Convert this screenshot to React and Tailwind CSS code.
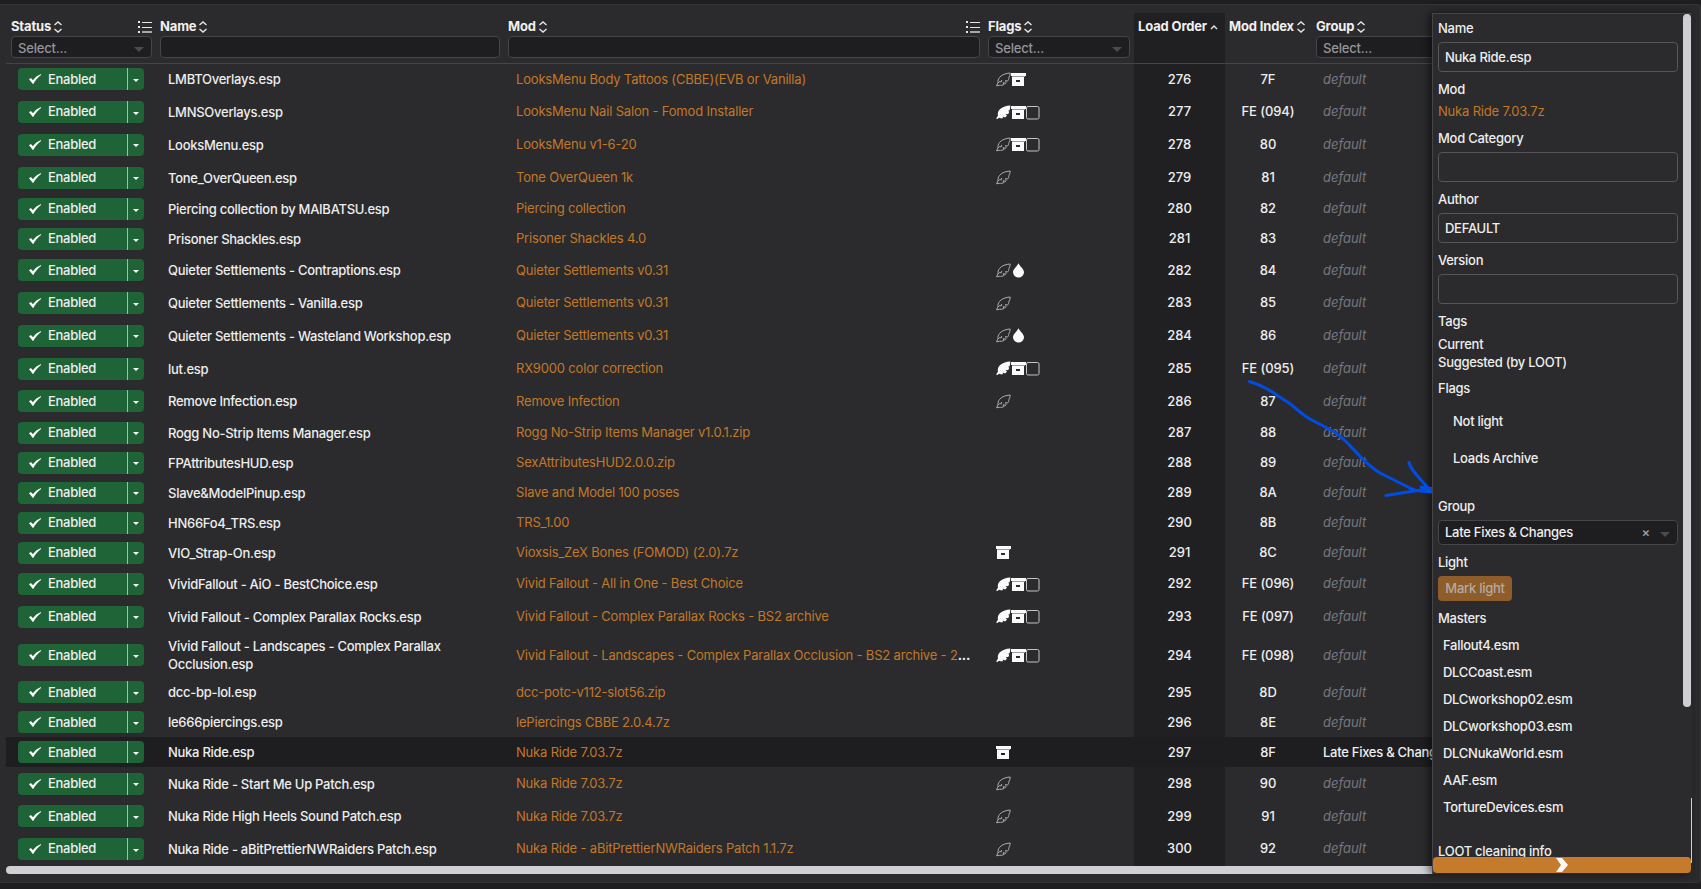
import { Fragment } from 'react';

const ROWS = [
  ['LMBTOverlays.esp', 'LooksMenu Body Tattoos (CBBE)(EVB or Vanilla)', 'la', '276', '7F'],
  ['LMNSOverlays.esp', 'LooksMenu Nail Salon - Fomod Installer', 'Lab', '277', 'FE (094)'],
  ['LooksMenu.esp', 'LooksMenu v1-6-20', 'lab', '278', '80'],
  ['Tone_OverQueen.esp', 'Tone OverQueen 1k', 'l', '279', '81'],
  ['Piercing collection by MAIBATSU.esp', 'Piercing collection', '', '280', '82'],
  ['Prisoner Shackles.esp', 'Prisoner Shackles 4.0', '', '281', '83'],
  ['Quieter Settlements - Contraptions.esp', 'Quieter Settlements v0.31', 'ld', '282', '84'],
  ['Quieter Settlements - Vanilla.esp', 'Quieter Settlements v0.31', 'l', '283', '85'],
  ['Quieter Settlements - Wasteland Workshop.esp', 'Quieter Settlements v0.31', 'ld', '284', '86'],
  ['lut.esp', 'RX9000 color correction', 'Lab', '285', 'FE (095)'],
  ['Remove Infection.esp', 'Remove Infection', 'l', '286', '87'],
  ['Rogg No-Strip Items Manager.esp', 'Rogg No-Strip Items Manager v1.0.1.zip', '', '287', '88'],
  ['FPAttributesHUD.esp', 'SexAttributesHUD2.0.0.zip', '', '288', '89'],
  ['Slave&ModelPinup.esp', 'Slave and Model 100 poses', '', '289', '8A'],
  ['HN66Fo4_TRS.esp', 'TRS_1.00', '', '290', '8B'],
  ['VIO_Strap-On.esp', 'Vioxsis_ZeX Bones (FOMOD) (2.0).7z', 'a', '291', '8C'],
  ['VividFallout - AiO - BestChoice.esp', 'Vivid Fallout - All in One - Best Choice', 'Lab', '292', 'FE (096)'],
  ['Vivid Fallout - Complex Parallax Rocks.esp', 'Vivid Fallout - Complex Parallax Rocks - BS2 archive', 'Lab', '293', 'FE (097)'],
  ['Vivid Fallout - Landscapes - Complex Parallax Occlusion.esp', 'Vivid Fallout - Landscapes - Complex Parallax Occlusion - BS2 archive - 2', 'Lab', '294', 'FE (098)'],
  ['dcc-bp-lol.esp', 'dcc-potc-v112-slot56.zip', '', '295', '8D'],
  ['le666piercings.esp', 'lePiercings CBBE 2.0.4.7z', '', '296', '8E'],
  ['Nuka Ride.esp', 'Nuka Ride 7.03.7z', 'a', '297', '8F'],
  ['Nuka Ride - Start Me Up Patch.esp', 'Nuka Ride 7.03.7z', 'l', '298', '90'],
  ['Nuka Ride High Heels Sound Patch.esp', 'Nuka Ride 7.03.7z', 'l', '299', '91'],
  ['Nuka Ride - aBitPrettierNWRaiders Patch.esp', 'Nuka Ride - aBitPrettierNWRaiders Patch 1.1.7z', 'l', '300', '92'],
];

const MASTERS = [
  'Fallout4.esm',
  'DLCCoast.esm',
  'DLCworkshop02.esm',
  'DLCworkshop03.esm',
  'DLCNukaWorld.esm',
  'AAF.esm',
  'TortureDevices.esm',
];

const COLUMNS = 'grid grid-cols-[150px_348px_480px_150px_91px_87px_240px]';

function Sort() {
  return (
    <svg className="ml-[2px] h-3 w-2.5 shrink-0" viewBox="0 0 10 12" fill="none" stroke="#e6e6e6" strokeWidth="1.4">
      <path d="M1.5 4 5 1 8.5 4M1.5 8 5 11 8.5 8" />
    </svg>
  );
}

function SortUp() {
  return (
    <svg className="ml-[3px] h-3 w-2 shrink-0" viewBox="0 0 8 12" fill="none" stroke="#e6e6e6" strokeWidth="1.4">
      <path d="M1 8 4 5 7 8" />
    </svg>
  );
}

function ListIcon() {
  return (
    <svg className="ml-auto h-3 w-3.5 shrink-0" viewBox="0 0 14 12" fill="#e6e6e6" shapeRendering="crispEdges">
      <path d="M0 0h2v2H0zM0 5h2v2H0zM0 10h2v2H0zM4 1h10v1H4zM4 6h10v1H4z" />
      <path d="M4 10h10v2H4z" fill="#a6a6a8" />
    </svg>
  );
}

function FeatherIcon({ filled }) {
  return (
    <svg className="h-[15px] w-[15px] shrink-0" viewBox="0 0 15 15">
      {filled ? (
        <path
          fill="#fafafa"
          d="M14.3.6C10 .8 5.800 2 3.400 4.800 2 6.600 1.500 8.500 2 10.600L.3 13.300l.7.9 2-1.4c1.300.6 2.700.7 4 .4L6.800 11.600l2.300 1c.8-.5 1.500-1.200 1.900-2L9.600 9.200l2.500-.1c.7-.9 1-1.700 1.100-2.700l-1.100-.5 1.600-1c.4-1.200.6-2.700.6-4.300z"
        />
      ) : (
        <path
          fill="none"
          stroke="#adadad"
          strokeWidth="1"
          strokeLinejoin="round"
          d="M14.2 1C10 1.300 5.800 2.600 3.500 5.400 2.200 7.200 1.800 9 2 10.600L.6 13.800l2.600-.5c1.900.2 3.600-.1 5-.9L7 10.700l2.800.6c.5-.7.4-1.500-.4-2.600l2.300.2c1-1.200 1.100-2 1.100-3.100.9-1.500 1.300-3 1.400-4.800zM2 10.800 3.800 9.500l1.300.5.6-2"
        />
      )}
    </svg>
  );
}

function ArchiveIcon() {
  return (
    <svg className="h-[15px] w-[15px] shrink-0" viewBox="0 0 15 15" shapeRendering="crispEdges">
      <path fill="#fafafa" d="M0 1h15v3H0z" />
      <path fill="#9b9b9b" d="M1 4h13v1H1z" />
      <path fill="#fafafa" fillRule="evenodd" d="M1 5h12v9H1zM5 8v2h4V8z" />
    </svg>
  );
}

function BoxIcon() {
  return (
    <svg className="h-[15px] w-[15px] shrink-0" viewBox="0 0 15 15" fill="none" stroke="#c4c4c4">
      <rect x="0.5" y="1.5" width="12.5" height="12.5" rx="1.5" />
    </svg>
  );
}

function DropIcon() {
  return (
    <svg className="h-[15px] w-[15px] shrink-0" viewBox="0 0 15 15" fill="#fafafa">
      <path d="M7.5.3C6 3.500 2 6 2 9.300a5.400 5.200 0 0 0 11 0C13 6 9 3.500 7.500.3z" />
    </svg>
  );
}

const FLAG_ICONS = {
  l: <FeatherIcon />,
  L: <FeatherIcon filled />,
  a: <ArchiveIcon />,
  b: <BoxIcon />,
  d: <DropIcon />,
};

function Select() {
  return (
    <div className="flex h-[22px] items-center justify-between rounded border border-[#45454a] bg-[#1e1e20] pl-1.5 pr-[7px] text-[13px] tracking-[-0.2px] text-[#95959b]">
      <span className="pt-[3px]">Select...</span>
      <span className="mt-1 border-x-[5px] border-t-[5px] border-x-transparent border-t-[#4a4a50]" />
    </div>
  );
}

function TextFilter() {
  return <div className="h-[22px] rounded border border-[#45454a] bg-[#1e1e20]" />;
}

function HeaderCell({ label, list, up, className = 'pl-1', children }) {
  return (
    <div className={`pr-1 pt-[5px] ${className}`}>
      <div className="flex h-[18px] items-center whitespace-nowrap text-[13px] font-bold tracking-[-0.15px] text-[#f0f0f0]">
        <span>{label}</span>
        {up ? <SortUp /> : <Sort />}
        {list && <ListIcon />}
      </div>
      {children}
    </div>
  );
}

function StatusButton() {
  return (
    <div className="ml-3 flex h-[22px] w-[126px] overflow-hidden rounded bg-[#1e6437]">
      <div className="flex flex-1 items-center pl-[11px]">
        <svg className="h-3 w-3" viewBox="0 0 12 12" fill="#fff">
          <path d="M0 6.300 1.900 5l2.100 2.200C6 4.500 8.500 2.300 12 1v1C8.600 4.600 6.400 7.400 4.100 11.300z" />
        </svg>
        <span className="ml-[7px]">Enabled</span>
      </div>
      <div className="flex w-[17px] items-center justify-center border-l border-[#9cc0a8]">
        <span className="mt-0.5 border-x-[3px] border-t-[3px] border-x-transparent border-t-white" />
      </div>
    </div>
  );
}

function rowHeight(name, flags) {
  if (name.length > 50) return 'h-[44px]';
  return /[lL]/.test(flags) ? 'h-[32.75px]' : 'h-[30px]';
}

function Row({ row }) {
  const [name, mod, flags, order, index] = row;
  const selected = order === '297';
  return (
    <div className={`${COLUMNS} ${rowHeight(name, flags)} items-center ${selected ? 'bg-[#1e1e20]' : ''}`}>
      <StatusButton />
      <div className="pl-3 pr-8 leading-[18px]">{name}</div>
      <div className="flex pl-3 pr-2.5 tracking-[-0.18px] font-normal text-[#c17829]">
        <span className="whitespace-nowrap">{mod}</span>
        {order === '294' && <span className="font-bold text-[#f0f0f0]">...</span>}
      </div>
      <div className="flex pl-3">
        {[...flags].map((f) => (
          <Fragment key={f}>{FLAG_ICONS[f]}</Fragment>
        ))}
      </div>
      <div className="text-center tracking-normal">{order}</div>
      <div className="pr-px text-center tracking-[-0.1px]">{index}</div>
      <div className="whitespace-nowrap pl-[11px]">
        {selected ? 'Late Fixes & Changes' : <span className="font-normal italic tracking-normal text-[#77777d]">default</span>}
      </div>
    </div>
  );
}

function Arrow() {
  return (
    <svg
      className="pointer-events-none absolute left-[1240px] top-[370px] h-[140px] w-[192px]"
      viewBox="1240 370 192 140"
      fill="none"
      stroke="#004de6"
      strokeWidth="3"
      strokeLinecap="round"
      strokeLinejoin="round"
    >
      <path d="M1249.5 381.500C1258 384 1270 390 1278 396L1289 403C1296 408 1302 415 1310 419L1329 429C1340 434 1348 443 1355 451C1363 460 1372 468 1380 473L1411 488.500Q1416 491.500 1432 492" />
      <path d="M1409 462.500C1411 470 1416 474 1420 479L1430 490M1386 495.500 1411 491.500 1434 488M1421 487l9 2" />
    </svg>
  );
}

function Label({ children }) {
  return <div className="h-5 leading-[22px]">{children}</div>;
}

function Field({ label, value }) {
  return (
    <div>
      <Label>{label}</Label>
      <div className="mt-[5px] flex h-[30px] items-center rounded border border-[#55555a] pl-1.5 pt-0.5">{value}</div>
    </div>
  );
}

function DetailsPanel() {
  return (
    <aside className="absolute left-[1432px] top-[13px] flex h-[861px] w-[260px] flex-col border-l border-t border-[#454549] bg-[#2b2b2d] shadow-[-3px_0_8px_rgba(0,0,0,0.55)]">
      <div className="flex min-h-0 flex-1">
        <div className="w-[250px] overflow-hidden pl-[5px] pr-[5px] pt-[3px]">
          <Field label="Name" value="Nuka Ride.esp" />
          <div className="mt-[6px]">
            <Label>Mod</Label>
          </div>
          <div className="mt-[3px] h-5 leading-[21px] font-normal tracking-[-0.18px] text-[#c17829]">Nuka Ride 7.03.7z</div>
          <div className="mt-[6px]">
            <Field label="Mod Category" />
          </div>
          <div className="mt-[6px]">
            <Field label="Author" value="DEFAULT" />
          </div>
          <div className="mt-[6px]">
            <Field label="Version" />
          </div>
          <div className="mt-[6px]">
            <Label>Tags</Label>
          </div>
          <div className="mt-[5px] leading-[18px]">
            <div>Current</div>
            <div>Suggested (by LOOT)</div>
          </div>
          <div className="mt-[7px] h-5 leading-5">Flags</div>
          <div className="ml-[15px] mt-[13px] h-5 leading-5">Not light</div>
          <div className="ml-[15px] mt-[17px] h-5 leading-5">Loads Archive</div>
          <div className="mt-[28px] h-5 leading-5">Group</div>
          <div className="mt-[4px] flex h-[25px] items-center rounded border border-[#45454a] bg-[#1e1e20] pl-1.5 pr-[7px]">
            <span>Late Fixes &amp; Changes</span>
            <span className="ml-auto text-[13px] text-[#a3a3a8]">×</span>
            <span className="ml-2.5 mt-1 border-x-[5px] border-t-[5px] border-x-transparent border-t-[#4a4a50]" />
          </div>
          <div className="mt-[7px] h-5 leading-5">Light</div>
          <div className="mt-[4px] flex h-[25px] w-[74px] items-center justify-center rounded bg-[#8f5d2a] text-[#b5aaa0]">Mark light</div>
          <div className="mt-[7px] h-5 leading-5">Masters</div>
          <div className="ml-[5px] mt-[4px]">
            {MASTERS.map((master) => (
              <div key={master} className="h-[27px] leading-[27px]">{master}</div>
            ))}
          </div>
          <div className="mt-[20px] h-5 leading-5">LOOT cleaning info</div>
        </div>
        <div className="h-[693px] w-2 rounded-full bg-[#cfced3]" />
        <div className="mt-auto h-[59px] w-px bg-[#cfced3]" />
      </div>
      <div className="mb-px flex h-4">
        <button className="flex w-[258px] items-center justify-center rounded bg-[#c67a2b]">
          <svg className="h-[14px] w-3" viewBox="0 0 12 14" fill="#fafafa">
            <path d="M0 0h6l6 7-6 7H0l5-7z" />
          </svg>
        </button>
        <div className="h-1.5 w-px bg-[#cfced3]" />
      </div>
    </aside>
  );
}

export default function App() {
  return (
    <div className="relative h-[889px] w-[1701px] overflow-hidden bg-[#1e1e20] pt-1 font-['Inter',sans-serif] text-[13px] font-medium tracking-[-0.27px] text-[#eeeeee]">
      <div className="h-[879px] w-[1701px] rounded-r border-y border-r border-[#353538] bg-[#2b2b2d] pl-1.5 pt-2">
        <div className="flex h-[861px] w-[1686px] flex-col overflow-hidden">
          <div className="min-h-0 flex-1 overflow-hidden bg-[linear-gradient(90deg,transparent_1128px,#202022_1128px,#202022_1219px,transparent_1219px)]">
            <div className={`${COLUMNS} h-[51px] border-b border-[#454549]`}>
              <HeaderCell label="Status" list className="pl-[5px]"><Select /></HeaderCell>
              <HeaderCell label="Name"><TextFilter /></HeaderCell>
              <HeaderCell label="Mod" list><TextFilter /></HeaderCell>
              <HeaderCell label="Flags"><Select /></HeaderCell>
              <HeaderCell label="Load Order" up />
              <HeaderCell label="Mod Index" />
              <HeaderCell label="Group"><Select /></HeaderCell>
            </div>
            <div className="-mt-px">
              {ROWS.map((row) => (
                <Row key={row[3]} row={row} />
              ))}
            </div>
          </div>
          <div className="h-2 rounded-l-full bg-[#d0cfd4]" />
        </div>
      </div>
      <DetailsPanel />
      <Arrow />
    </div>
  );
}
